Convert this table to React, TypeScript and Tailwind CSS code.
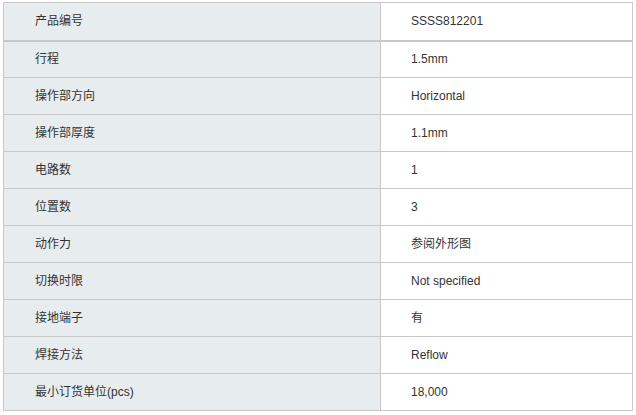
const rows: [string, string][] = [
  ['产品编号', 'SSSS812201'],
  ['行程', '1.5mm'],
  ['操作部方向', 'Horizontal'],
  ['操作部厚度', '1.1mm'],
  ['电路数', '1'],
  ['位置数', '3'],
  ['动作力', '参阅外形图'],
  ['切换时限', 'Not specified'],
  ['接地端子', '有'],
  ['焊接方法', 'Reflow'],
  ['最小订货单位(pcs)', '18,000'],
];

const App = () => {
  return (
    <div className="w-[636px] h-[415px] bg-white pt-[2px] pl-[3px] font-['Liberation_Sans','Noto_Sans_CJK_SC',sans-serif] text-[12px] text-[#333]">
      <table className="w-[630px] border-collapse border border-[#c8c8c8]">
        <tbody>
          {rows.map(([label, value], i) => (
            <tr
              key={label}
              className={i === 0 ? 'border-b-2 border-[#c8c8c8]' : 'border-b border-[#c8c8c8]'}
            >
              <th className={`w-[377px] ${i === 0 ? 'h-[38px]' : 'h-[37px]'} p-0 pl-[31px] text-left font-normal bg-[#e7edef] border-r border-[#c8c8c8]`}>
                {label}
              </th>
              <td className="p-0 pl-[30px] text-left">{value}</td>
            </tr>
          ))}
        </tbody>
      </table>
    </div>
  );
};

export default App;
